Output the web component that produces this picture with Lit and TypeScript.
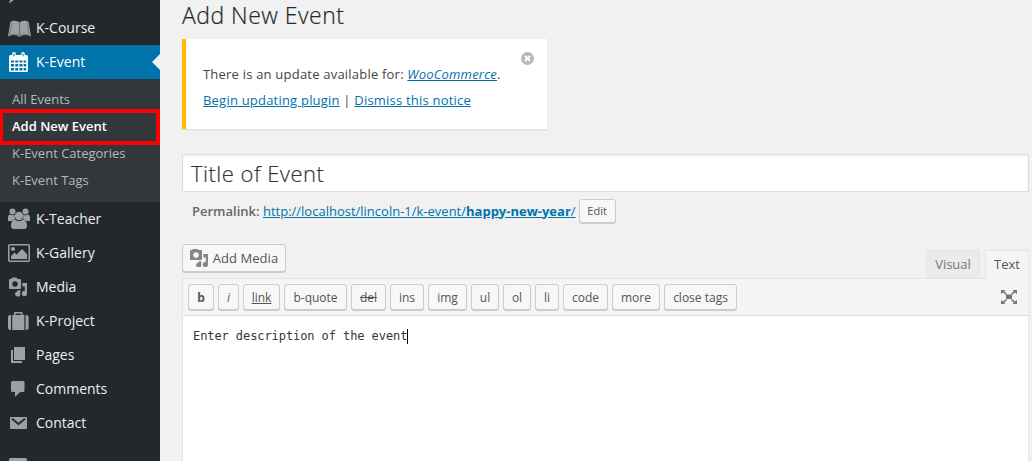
import { LitElement, html, css, svg } from "lit";
import { customElement } from "lit/decorators.js";

const media = svg`
  <path fill-rule="evenodd" d="M9 10q0-1 1-1h1.200l1-1.500h4.300l1 1.500H20q1 0 1 1v8q0 1-1 1H10q-1 0-1-1zM15 11.200a2.800 2.800 0 1 0 .01 0z"/>
  <path d="M22.300 13H27v10.500a2.600 2.600 0 1 1-2.200-2.500v-4.500h-2.500z"/>
  <path d="M17.500 20.300h2.800v3.600a2.600 2.600 0 1 1-2.800-2.500z"/>`;

const icons: Record<string, unknown> = {
  course: svg`
    <path d="M8 25.500L10.300 11.300Q11 9.800 13.500 9.800Q17.500 9.300 19.500 11.500Q21.500 9.300 25.500 9.800Q28 9.800 28.700 11.300L31 25.500Q23.500 22.500 19.500 26Q15.500 22.500 8 25.500z"/>
    <path d="M11.800 11.600L9.900 24Q15.500 21.800 19.500 24.600Q23.500 21.800 29.100 24L27.200 11.600" fill="none" stroke="#5f656a" stroke-width=".6"/>
    <path d="M19.500 11.500V24.500" stroke="#4a5055" stroke-width=".7"/>`,
  calendar: svg`
    <rect x="9" y="10" width="19" height="17" rx="1.500"/>
    <path d="M11 15.500h3v2h-3zM15.200 15.500h3v2h-3zM19.400 15.500h3v2h-3zM23.600 15.500h2.600v2h-2.600zM11 19h3v2.600h-3zM15.200 19h3v2.600h-3zM19.400 19h3v2.600h-3zM23.600 19h2.600v2.600h-2.600zM11 23h3v2.500h-3zM15.200 23h3v2.500h-3zM19.400 23h3v2.500h-3zM23.600 23h2.600v2.500h-2.600z" fill="#0073aa"/>
    <rect x="12.200" y="6.900" width="3.600" height="6" rx="1.800"/><rect x="21.200" y="6.900" width="3.600" height="6" rx="1.800"/>
    <path d="M14 8.500v2.800M23 8.500v2.800" stroke="#0073aa"/>`,
  people: svg`
    <circle cx="12.500" cy="9.600" r="3"/><circle cx="25.500" cy="9.600" r="3"/>
    <path d="M8 18.500Q7.600 12.500 9.800 12.500Q12.500 14 15 12.800Q14 15 15.200 17.200Q13 17.300 12 19H9Q8 19 8 18.500zM30 18.500Q30.400 12.500 28.200 12.500Q25.500 14 23 12.800Q24 15 22.800 17.200Q25 17.300 26 19H29Q30 19 30 18.500z"/>
    <circle cx="19" cy="14" r="4.200"/>
    <path d="M14.800 17.600Q19 20.800 23.200 17.600Q27 18.300 27 24Q27 27 24 27H14Q11 27 11 24Q11 18.300 14.800 17.600z"/>`,
  picture: svg`
    <rect x="8.750" y="8.750" width="20.500" height="16.500" rx="1" fill="none" stroke="#9ca1a6" stroke-width="1.500"/>
    <circle cx="13" cy="13" r="2.100"/><path d="M11 23v-3l3.500-3.500 2 2 5.500-5.500 5 5V23z"/>`,
  media,
  suitcase: svg`
    <path d="M14.700 11V9.200Q14.700 8.700 15.200 8.700h6.200q.5 0 .5.5V11" fill="none" stroke="#9ca1a6" stroke-width="1.500"/>
    <rect x="12.200" y="11" width="12.200" height="15"/>
    <path d="M11 11v15h-.7Q8 26 8 23.700V13.300Q8 11 10.300 11zM25.600 11v15h.7q2.300 0 2.300-2.300V13.300Q28.600 11 26.300 11z"/>`,
  pages: svg`<path d="M14 9h11v13H14zM11 12h2v11h9v2H11z"/>`,
  comment: svg`<path d="M12.500 9h10.500q1.500 0 1.500 1.500v8q0 1.500-1.500 1.500h-2.800L15 25v-5h-2.500Q11 20 11 18.500v-8Q11 9 12.500 9z"/>`,
  mail: svg`<rect x="10" y="11" width="17" height="12" rx="1"/><path d="M12 12.700l6.500 5.300 6.500-5.300" fill="none" stroke="#23282d" stroke-width="1.800"/>`,
  box: svg`<rect x="9" y="9" width="18" height="16" rx="1.500"/>`,
};

const above = [["course", "K-Course"]];
const below = [
  ["people", "K-Teacher"], ["picture", "K-Gallery"], ["media", "Media"], ["suitcase", "K-Project"],
  ["pages", "Pages"], ["comment", "Comments"], ["mail", "Contact"],
];
const tags: [string, number, string?][] = [
  ["b", 26, "bold"], ["i", 21, "ital"], ["link", 37, "under"], ["b-quote", 63], ["del", 35, "strike"],
  ["ins", 34], ["img", 39], ["ul", 28], ["ol", 28], ["li", 24], ["code", 45], ["more", 48], ["close tags", 73],
];

@customElement("admin-menu")
class AdminMenu extends LitElement {
  static styles = css`
    :host { display: block; width: 160px; height: 461px; overflow: hidden; background: #23282d; color: #eee; font-size: 14px; }
    .peek { height: 11px; overflow: hidden; }
    .row { display: flex; align-items: center; height: 34px; }
    .icon { width: 36px; height: 34px; flex: none; fill: #9ca1a6; display: block; }
    .label { line-height: 18px; white-space: nowrap; }
    .active { background: #0073aa; color: #fff; }
    .active .icon { fill: #fff; }
    .arrow { margin-left: auto; border: 8px solid transparent; border-right-color: #f1f1f1; border-left: 0; }
    .sub { box-sizing: border-box; height: 123px; padding-top: 7px; background: #32373c; color: #b4b9be; font-size: 13px; }
    .item { height: 27px; line-height: 26px; padding-left: 12px; white-space: nowrap; position: relative; }
    .current { color: #fff; font-weight: 600; }
    .mark { position: absolute; left: 0; top: -4px; width: 160px; height: 36px; box-sizing: border-box; border: 4px solid #f00; border-left-width: 3px; }
    .gap { height: 9px; }
  `;
  row(icon: string, label: string, active = false) {
    return html`<div class="row ${active ? "active" : ""}">
      <svg class="icon" viewBox="0 0 36 34">${icons[icon]}</svg><span class="label">${label}</span>
      ${active ? html`<span class="arrow"></span>` : ""}
    </div>`;
  }
  render() {
    return html`
      <div class="peek"><svg class="icon" viewBox="0 23 36 34"><path d="M9 25l3-4 3 1-5 4z"/></svg></div>
      ${above.map(([i, l]) => this.row(i, l))}
      ${this.row("calendar", "K-Event", true)}
      <div class="sub">
        <div class="item">All Events</div>
        <div class="item current">Add New Event<span class="mark"></span></div>
        <div class="item">K-Event Categories</div>
        <div class="item">K-Event Tags</div>
      </div>
      ${below.map(([i, l]) => this.row(i, l))}
      <div class="gap"></div>
      ${this.row("box", "")}
    `;
  }
}

@customElement("app-root")
class AppRoot extends LitElement {
  static styles = css`
    :host { display: flex; width: 1032px; height: 461px; overflow: hidden; background: #f1f1f1; color: #444; font: 13px "Open Sans", sans-serif; }
    .main { width: 847px; margin-left: 22px; display: flex; flex-direction: column; align-items: stretch; }
    h1 { margin: 0; height: 39px; line-height: 31px; font-size: 23px; font-weight: 400; color: #23282d; }
    .heading { font-weight: 300; -webkit-text-stroke: .2px; letter-spacing: .48px; }
    a { color: #0073aa; text-decoration: underline; }
    .notice { box-sizing: border-box; width: 365px; height: 90px; background: #fff; border-left: 4px solid #ffb900; box-shadow: 0 1px 1px rgba(0,0,0,.08); display: flex; justify-content: space-between; padding: 22px 12px 0 17px; }
    .copy { line-height: 26px; white-space: nowrap; font-weight: 500; letter-spacing: .21px; }
    .close { display: block; width: 15px; height: 15px; margin-top: -10px; }
    .title { box-sizing: border-box; height: 38px; margin-top: 25px; background: #fff; border: 1px solid #ddd; box-shadow: inset 0 1px 2px rgba(0,0,0,.07); line-height: 36px; padding-left: 8px; font-size: 22px; color: #32373c; }
    .perma { display: flex; align-items: center; height: 25px; margin: 6px 0 1px 10px; color: #666; line-height: 24px; white-space: pre; }
    .semi { font-weight: 600; }
    .btn { box-sizing: border-box; border: 1px solid #ccc; border-radius: 3px; background: #f7f7f7; box-shadow: 0 1px 0 #ccc; color: #555; display: flex; align-items: center; justify-content: center; white-space: nowrap; }
    .edit { width: 37px; height: 24px; margin-left: 3px; font-size: 11px; }
    .tools { display: flex; height: 54px; align-items: flex-end; }
    .add { width: 104px; height: 28px; margin-bottom: 6px; letter-spacing: .06px; }
    .add-icon { width: 18px; height: 18px; fill: #82878c; margin-right: 5px; }
    .tabs { margin-left: auto; display: flex; gap: 5px; align-items: flex-end; position: relative; margin-bottom: -1px; }
    .tab { box-sizing: border-box; border: 1px solid #e5e5e5; height: 29px; line-height: 27px; text-align: center; font-size: 13px; }
    .visual { width: 54px; background: #ebebeb; color: #777; }
    .text { width: 44px; background: #f5f5f5; border-bottom-color: #f5f5f5; color: #555; }
    .editor { box-sizing: border-box; flex: 1; border: 1px solid #e5e5e5; border-bottom: 0; background: #fff; }
    .bar { box-sizing: border-box; height: 37px; padding: 5px 10px 0 5px; display: flex; gap: 4px; background: #f5f5f5; border-bottom: 1px solid #ddd; }
    .tag { height: 26px; font-size: 12px; }
    .bold { font-weight: 700; }
    .ital { font-style: italic; }
    .under { text-decoration: underline; }
    .strike { text-decoration: line-through; }
    .full { width: 18px; height: 16px; margin: 5px 0 0 auto; fill: #72777c; }
    .body { padding: 11px 10px; display: flex; align-items: center; font: 12px/18px "DejaVu Sans Mono", monospace; letter-spacing: -.08px; color: #32373c; }
    .caret { width: 1px; height: 15px; background: #000; }
  `;
  render() {
    return html`
      <admin-menu></admin-menu>
      <div class="main">
        <h1><span class="heading">Add New Event</span></h1>
        <div class="notice">
          <div class="copy">
            <div>There is an update available for: <a><em>WooCommerce</em></a>.</div>
            <div><a>Begin updating plugin</a> | <a>Dismiss this notice</a></div>
          </div>
          <svg class="close" viewBox="0 0 15 15"><circle cx="7.500" cy="7.500" r="6.500" fill="#b4b9be"/><path d="M5 5l5 5M10 5l-5 5" stroke="#fff" stroke-width="2"/></svg>
        </div>
        <div class="title"><span class="heading">Title of Event</span></div>
        <div class="perma"><span class="semi">Permalink: </span><a>http://localhost/lincoln-1/k-event/<b>happy-new-year</b>/</a><span class="btn edit">Edit</span></div>
        <div class="tools">
          <span class="btn add"><svg class="add-icon" viewBox="9 8 18 18">${media}</svg>Add Media</span>
          <div class="tabs"><span class="tab visual">Visual</span><span class="tab text">Text</span></div>
        </div>
        <div class="editor">
          <div class="bar">
            ${tags.map(([t, w, c]) => html`<span class="btn tag ${c ?? ""}" style="width:${w}px">${t}</span>`)}
            <svg class="full" viewBox="0 0 18 16"><path d="M6 5.500h6v4.500H6zM1 1h4.500L4.200 2.300 7 5 6 6 3 3.500 1 5zM17 1h-4.500l1.300 1.300L11 5l1 1 3-2.500L17 5zM1 15h4.500l-1.300-1.300L7 11l-1-1-3 2.500L1 11zM17 15h-4.500l1.300-1.300L11 11l1-1 3 2.500L17 11z"/></svg>
          </div>
          <div class="body">Enter description of the event<span class="caret"></span></div>
        </div>
      </div>
    `;
  }
}
